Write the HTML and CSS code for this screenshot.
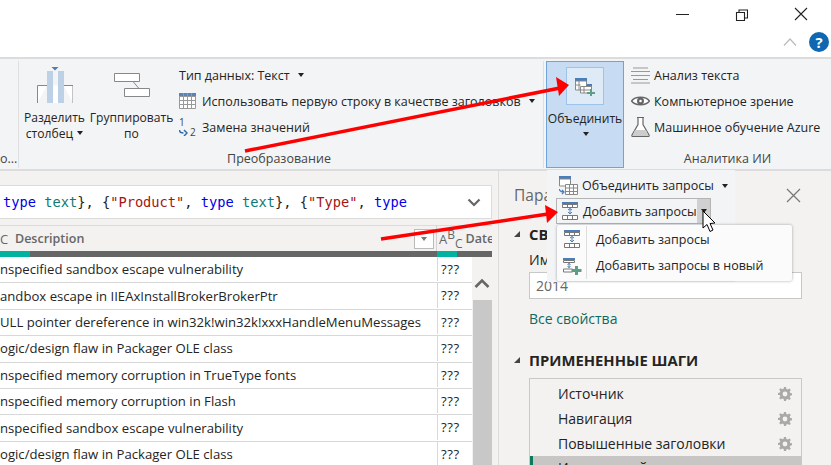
FILE: index.html
```html
<!DOCTYPE html>
<html lang="ru">
<head>
    <meta charset="UTF-8">
    <title>Power Query</title>
    <link rel="stylesheet" href="styles.css">
</head>
<body>

    <svg width="0" height="0" class="defs">
        <symbol id="gear" viewBox="0 0 14 14">
            <path d="M6 0h2l.4 2 1.300.6 1.800-1.100 1.300 1.400-1.100 1.700.5 1.300 1.800.4v2l-1.800.4-.5 1.300 1.100 1.700-1.300 1.400-1.800-1.100-1.300.6L8 14H6l-.4-2-1.300-.6-1.800 1.100-1.300-1.400 1.100-1.700-.5-1.300L0 8V6l1.800-.4.5-1.300-1.100-1.700 1.300-1.400 1.800 1.100 1.300-.6z" fill="#a9a9a9"/>
            <circle cx="7" cy="7" r="2.400" fill="#f3f2f1"/>
        </symbol>
        <symbol id="append" viewBox="0 0 18 18">
            <path d="M1 0h16v2.500H1z" fill="#4a7ebb"/>
            <path d="M1.500 2.500h15v3h-15zM1.500 13.500h15v4h-15z" fill="#fff" stroke="#777"/>
            <path d="M9 6.500v5.500M7 10l2 2 2-2M7 8l2-1.500L11 8" fill="none" stroke="#4a7ebb"/>
            <path d="M6.500 2.500v3M11.500 2.500v3M6.500 13.500v4M11.500 13.500v4" stroke="#777"/>
        </symbol>
    </svg>

    <header class="titlebar">
        <div class="window-controls">
            <svg width="13" height="13" viewBox="0 0 13 13"><path d="M0 6.500h13" stroke="#222"/></svg>
            <svg width="13" height="13" viewBox="0 0 13 13"><path d="M1.500 4.500h8v8h-8zM4 4V2h8.500v8H10" fill="none" stroke="#222" stroke-width="1.100"/></svg>
            <svg width="14" height="14" viewBox="0 0 14 14"><path d="M1 1l12 12M13 1L1 13" stroke="#222" stroke-width="1.100"/></svg>
        </div>
        <div class="help-row">
            <svg width="14" height="8" viewBox="0 0 14 8"><path d="M1 7.500l6-6.500 6 6.500" fill="none" stroke="#bbb" stroke-width="1.200"/></svg>
            <span class="help">?</span>
        </div>
    </header>

    <section class="ribbon">
        <div class="group group-cut">
            <span class="group-label">о...</span>
        </div>

        <div class="group group-transform">
            <div class="group-body">
                <div class="big-btn btn-split">
                    <svg width="36" height="36" viewBox="0 0 36 36">
                        <path d="M.5 36V18.500h9.500M36 36V18.500h-9.500" fill="#fff" stroke="#888"/>
                        <path d="M10 18.500h16V36H10z" fill="#fff"/>
                        <path d="M10 4h6v32h-6zM21 4h6v32h-6z" fill="#bcd1e6"/>
                        <path d="M14.500 0h7L18 3.500z" fill="#4a7ebb"/>
                    </svg>
                    <span class="big-label">Разделить<br>столбец <i class="caret"></i></span>
                </div>
                <div class="big-btn btn-group">
                    <svg width="36" height="36" viewBox="0 0 36 36">
                        <path d="M.5 6.500h25v8H.5zM10.500 21.500h25v8h-25z" fill="#fff" stroke="#888"/>
                        <path d="M19 14.500l6 7" stroke="#888"/>
                    </svg>
                    <span class="big-label">Группировать<br>по</span>
                </div>
                <ul class="cmd-list">
                    <li>Тип данных: Текст <i class="caret"></i></li>
                    <li>
                        <svg width="18" height="16" viewBox="0 0 18 16">
                            <path d="M0 0h17v4H0z" fill="#5b83b5"/>
                            <path d="M.5 3.500h16v12H.5zM.5 7.500h16M.5 11.500h16M4.500 0v15M8.500 0v15M12.500 0v15" fill="#fff" stroke="#999"/>
                        </svg>
                        Использовать первую строку в качестве заголовков <i class="caret"></i>
                    </li>
                    <li>
                        <span class="replace-icon">
                            <span>1</span>
                            <svg width="9" height="7" viewBox="0 0 9 7"><path d="M.5 1q0 3 4 3M5 1l3 3-3 3" fill="none" stroke="#2f6fa8" stroke-width="1.500"/></svg>
                            <span class="two">2</span>
                        </span>
                        Замена значений
                    </li>
                </ul>
            </div>
            <span class="group-label">Преобразование</span>
        </div>

        <div class="group group-ai">
            <div class="group-body">
                <div class="merge-btn">
                    <span class="merge-icon">
                        <svg width="20" height="19" viewBox="0 0 20 19">
                            <path d="M0 1h12v3H0zM5 7h12v3H5z" fill="#4a7ebb"/>
                            <path d="M.5 4h11v9H.5z" fill="#fff" stroke="#888"/>
                            <path d="M5.500 9.500h11V16h-11z" fill="#fff" stroke="#888"/>
                            <path d="M.5 8h5M4 4v9M9 9.500V16M5.500 13h11" stroke="#888"/>
                            <path d="M15 12h2v3h3v2h-3v2h-2v-2h-3v-2h3z" fill="#5f9e84"/>
                        </svg>
                    </span>
                    <span class="big-label">Объединить</span>
                    <i class="caret"></i>
                </div>
                <ul class="cmd-list cmd-list-ai">
                    <li>
                        <svg width="19" height="17" viewBox="0 0 19 17"><path d="M2 1h15M0 4.500h19M0 8.500h19M2 12.500h15M0 16h19" stroke="#999"/></svg>
                        Анализ текста
                    </li>
                    <li>
                        <svg width="19" height="14" viewBox="0 0 19 14"><path d="M.5 7C4 2 15 2 18.500 7 15 12 4 12 .5 7z" fill="#fff" stroke="#666" stroke-width="1.500"/><circle cx="9.500" cy="7" r="3.500" fill="#666"/><circle cx="9.500" cy="7" r="1.300" fill="#fff"/></svg>
                        Компьютерное зрение
                    </li>
                    <li>
                        <svg width="19" height="20" viewBox="0 0 19 20"><path d="M6 .5h7M7 1v6.500L1 18q-.5 1.500 1 1.500h15q1.500 0 1-1.500L12 7.500V1" fill="#fff" stroke="#666" stroke-width="1.200"/><path d="M4 13h11l2.500 6h-16z" fill="#ccc"/></svg>
                        Машинное обучение Azure
                    </li>
                </ul>
            </div>
            <span class="group-label">Аналитика ИИ</span>
        </div>
    </section>

    <main class="workspace">
        <div class="data-side">
            <div class="formula">
                <code><span class="kw">type</span> <span class="ty">text</span>}, {<span class="str">"Product"</span>, <span class="kw">type</span> <span class="ty">text</span>}, {<span class="str">"Type"</span>, <span class="kw">type</span></code>
                <svg width="14" height="9" viewBox="0 0 14 9"><path d="M1.500 1.500L7 7l5.500-5.500" fill="none" stroke="#666" stroke-width="2.200"/></svg>
            </div>

            <div class="grid-head">
                <div class="head-desc">
                    <span class="abc abc-cut">C</span>
                    <span class="head-name">Description</span>
                    <span class="filter"><i class="caret caret-gray"></i></span>
                </div>
                <div class="head-date">
                    <span class="abc">A<sup>B</sup><sub>C</sub></span>
                    <span class="head-name">Date</span>
                </div>
            </div>
            <div class="quality">
                <span class="q-desc"><i></i></span>
                <span class="q-date"><i></i></span>
            </div>

            <div class="grid-body">
                <div class="rows">
                    <div class="row"><span>nspecified sandbox escape vulnerability</span><span>???</span></div>
                    <div class="row"><span>andbox escape in IIEAxInstallBrokerBrokerPtr</span><span>???</span></div>
                    <div class="row"><span>ULL pointer dereference in win32k!win32k!xxxHandleMenuMessages</span><span>???</span></div>
                    <div class="row"><span>ogic/design flaw in Packager OLE class</span><span>???</span></div>
                    <div class="row"><span>nspecified memory corruption in TrueType fonts</span><span>???</span></div>
                    <div class="row"><span>nspecified memory corruption in Flash</span><span>???</span></div>
                    <div class="row"><span>nspecified sandbox escape vulnerability</span><span>???</span></div>
                    <div class="row"><span>ogic/design flaw in Packager OLE class</span><span>???</span></div>
                </div>
                <div class="scrollbar">
                    <svg width="16" height="11" viewBox="0 0 16 11"><path d="M1.500 9L8 2.500 14.500 9" fill="none" stroke="#666" stroke-width="2.600"/></svg>
                    <div class="thumb"></div>
                </div>
            </div>
        </div>

        <aside class="pane">
            <div class="pane-title">
                <span>Пара</span>
                <svg width="15" height="15" viewBox="0 0 15 15"><path d="M1 1l13 13M14 1L1 14" stroke="#777" stroke-width="1.200"/></svg>
            </div>
            <h3 class="section"><i class="tri"></i>СВ</h3>
            <div class="field-label">Им</div>
            <div class="field">2014</div>
            <div class="link">Все свойства</div>
            <h3 class="section section-steps"><i class="tri"></i>ПРИМЕНЕННЫЕ ШАГИ</h3>
            <ul class="steps">
                <li>Источник <svg width="14" height="14"><use href="#gear"/></svg></li>
                <li>Навигация <svg width="14" height="14"><use href="#gear"/></svg></li>
                <li>Повышенные заголовки <svg width="14" height="14"><use href="#gear"/></svg></li>
                <li class="step-active">Измененный тип</li>
            </ul>
        </aside>
    </main>

    <!-- dropdown opened from the merge button -->
    <div class="merge-panel">
        <div class="panel-row">
            <svg width="19" height="19" viewBox="0 0 19 19">
                <path d="M0 0h12v3H0z" fill="#4a7ebb"/>
                <path d="M.5 3h11v7H.5z" fill="#fff" stroke="#888"/>
                <path d="M6.500 8.500h12v10h-12zM6.500 12h12M6.500 15.500h12M10.500 8.500v10M14.500 8.500v10" fill="#fff" stroke="#888"/>
                <path d="M0 13q1 3 5 3M3 14l2 2-2 2" fill="none" stroke="#4a7ebb" stroke-width="1.300"/>
            </svg>
            Объединить запросы <i class="caret"></i>
        </div>
        <div class="append-btn">
            <span class="append-main"><svg width="18" height="18"><use href="#append"/></svg>Добавить запросы</span>
            <span class="append-split"><i class="caret"></i></span>
        </div>
    </div>

    <div class="append-menu">
        <div class="menu-row"><span class="menu-ico"><svg width="18" height="18"><use href="#append"/></svg></span><span>Добавить запросы</span></div>
        <div class="menu-row">
            <span class="menu-ico">
                <svg width="20" height="18" viewBox="0 0 20 18">
                    <path d="M1 1h12v2H1z" fill="#4a7ebb"/>
                    <path d="M1.500 3.500h11v2h-11zM1.500 12h9v3h-9z" fill="#fff" stroke="#777"/>
                    <path d="M7 6.500v4M5.500 7.500L7 6.500l1.500 1M5.500 9.500l1.500 1 1.500-1" fill="none" stroke="#4a7ebb"/>
                    <path d="M13 9h3v3h3.500v3H16v3h-3v-3H9.500v-3H13z" fill="#5f9e84"/>
                </svg>
            </span>
            <span>Добавить запросы в новый</span>
        </div>
    </div>

    <!-- annotation arrows and mouse pointer drawn over the screenshot -->
    <svg class="overlay" width="831" height="465" viewBox="0 0 831 465">
        <path d="M245 151L560 88" stroke="#f00" stroke-width="3.500"/>
        <path d="M569 85L556 77l3 19z" fill="#f00"/>
        <path d="M381 239L548 214" stroke="#f00" stroke-width="3.500"/>
        <path d="M558 212L545 205l2 18z" fill="#f00"/>
        <path d="M703 211v17l4-3.500 3 7 3-1.500-3-6.500 5-.5z" fill="#fff" stroke="#000"/>
    </svg>

</body>
</html>
```

FILE: styles.css
```css
* { box-sizing: border-box; }
html, body {
    margin: 0;
    height: 465px;
    overflow: hidden;
}
body {
    position: relative;
    width: 831px;
    background: #f3f2f1;
    color: #252423;
    font-family: "Open Sans", sans-serif;
    font-size: 12.500px;
}
ul { margin: 0; padding: 0; list-style: none; }
.defs { position: absolute; }

/* title bar */
.titlebar {
    height: 57px;
    background: #fff;
    padding: 7px 23px 0 0;
}
.window-controls {
    display: flex;
    justify-content: flex-end;
    align-items: center;
    gap: 46px;
    height: 14px;
}
.help-row {
    display: flex;
    justify-content: flex-end;
    align-items: center;
    gap: 12px;
    margin: 11px -21px 0 0;
}
.help {
    width: 20px;
    height: 20px;
    border-radius: 50%;
    background: #0f67b1;
    color: #fff;
    font-weight: 700;
    font-size: 15px;
    line-height: 20px;
    text-align: center;
}

/* ribbon */
.ribbon {
    display: flex;
    height: 114px;
    background: #f3f4f6;
    border-top: 2px solid #dcdcdc;
    border-bottom: 2px solid #dcdcdc;
    padding-top: 2px;
}
.group {
    display: flex;
    flex-direction: column;
    height: 107px;
    border-right: 1px solid #dfdfdf;
}
.group-body { display: flex; flex: 1; }
.group-label {
    text-align: center;
    color: #444;
    line-height: 18px;
    white-space: nowrap;
}
.group-cut {
    width: 19px;
    justify-content: flex-end;
    overflow: hidden;
}
.group-cut .group-label { text-align: left; }
.group-transform { width: 525px; }
.group-transform > .group-label { padding-right: 4px; }
.group-ai { border-right: 0; margin-left: 2px; }
.group-ai .group-body { width: 285px; }

.big-btn {
    display: flex;
    flex-direction: column;
    align-items: center;
    padding-top: 6px;
    text-align: center;
}
.btn-split { width: 71px; }
.btn-group { width: 83px; }
.big-label {
    margin-top: 7px;
    font-size: 12.100px;
    line-height: 16px;
    white-space: nowrap;
}
.caret {
    display: inline-block;
    width: 0;
    height: 0;
    margin: 0 0 3px 1px;
    border: 3.500px solid transparent;
    border-top: 4px solid #222;
    border-bottom: 0;
}
.caret-gray { border-top-color: #777; }

.cmd-list {
    display: flex;
    flex-direction: column;
    gap: 6px;
    padding: 4px 0 0 6px;
}
.cmd-list li {
    display: flex;
    align-items: center;
    gap: 5px;
    height: 20px;
    white-space: nowrap;
}
.cmd-list li .caret { margin: 0 0 0 3px; }
.replace-icon {
    display: grid;
    grid-template-columns: 8px 10px;
    width: 18px;
    font-size: 10px;
    line-height: 9px;
    color: #444;
}
.replace-icon svg { grid-row: 2; margin-top: 2px; }
.replace-icon .two { grid-row: 2; grid-column: 2; padding-left: 3px; margin-top: 1px; }
.cmd-list-ai li { gap: 4px; }

.merge-btn {
    display: flex;
    flex-direction: column;
    align-items: center;
    width: 78px;
    height: 107px;
    padding-top: 5px;
    background: #c7dcf2;
    border: 1px solid #6ea3dc;
}
.merge-btn .big-label { margin: 6px 0 5px; }
.merge-icon {
    display: flex;
    justify-content: center;
    padding-top: 9px;
    width: 38px;
    height: 38px;
    background: #deebf7;
    border: 1px solid #9cc3ea;
}
.cmd-list-ai { padding-left: 7px; }
.group-ai .group-label { margin-top: -18px; width: 285px; padding-left: 78px; position: relative; }

/* data side */
.workspace { display: flex; height: 294px; overflow: hidden; }
.data-side { width: 492px; padding-top: 14px; }
.formula {
    display: flex;
    justify-content: space-between;
    align-items: center;
    height: 34px;
    padding: 0 10px 0 3px;
    background: #fff;
    border: 1px solid #dcdcdc;
    border-left: 0;
}
.formula code {
    font-family: "DejaVu Sans Mono", monospace;
    font-size: 13.700px;
    white-space: pre;
}
.formula .kw { color: #0000e6; }
.formula .ty { color: #0b7a75; }
.formula .str { color: #a31515; }

.grid-head {
    display: flex;
    height: 26px;
    margin-top: 6px;
    background: #f3f2f1;
    border-top: 1px solid #dcdcdc;
    color: #666;
    font-weight: 600;
}
.head-desc {
    display: flex;
    align-items: center;
    width: 437px;
    border-right: 1px solid #d2d2d2;
}
.head-name { margin-left: 7px; white-space: nowrap; }
.abc { font-weight: 400; font-size: 13px; line-height: 14px; }
.abc sup, .abc sub { font-size: 12px; line-height: 0; }
.abc-cut { width: 8px; }
.filter {
    display: flex;
    justify-content: center;
    align-items: center;
    width: 20px;
    height: 20px;
    margin: 0 2px 0 auto;
    background: #fff;
    border: 1px solid #bbb;
}
.filter .caret { margin: 0; }
.head-date {
    display: flex;
    align-items: center;
    width: 55px;
    padding-left: 2px;
    overflow: hidden;
}
.head-date .head-name { margin-left: 3px; }

.quality {
    display: flex;
    height: 6px;
    background: #666;
}
.q-desc { width: 437px; }
.q-date { width: 55px; }
.quality i { display: block; height: 6px; background: #00b2a0; }
.q-desc i { width: 30px; }
.q-date i { width: 20px; }

.grid-body { display: flex; height: 209px; overflow: hidden; }
.rows { width: 472px; }
.row {
    display: flex;
    height: 26.400px;
    align-items: center;
    padding-bottom: 1px;
    background: #fff;
    border-bottom: 1px solid #d9d9d9;
    font-size: 13.150px;
    white-space: nowrap;
}
.row span:first-child { width: 437px; }
.row span:last-child {
    align-self: stretch;
    width: 35px;
    padding-left: 3px;
    line-height: 25px;
    letter-spacing: .6px;
    border-left: 1px solid #d9d9d9;
}
.scrollbar { width: 20px; }
.scrollbar svg { display: block; margin: 21px auto 11px; }
.thumb {
    width: 19px;
    height: 166px;
    margin-left: 1px;
    background: #c8c8c8;
}

/* query settings pane */
.pane {
    width: 339px;
    margin-left: 6px;
    padding: 14px 0 0 15px;
    border-left: 1px solid #dcdcdc;
    font-size: 14px;
}
.pane-title {
    display: flex;
    justify-content: space-between;
    align-items: center;
    height: 20px;
    padding-right: 30px;
    color: #666;
    font-size: 15.500px;
}
.section {
    display: flex;
    align-items: center;
    margin: 19px 0 0;
    font-size: 14.800px;
    font-weight: 700;
    line-height: 20px;
    color: #252423;
}
.section-steps { margin-top: 22px; }
.tri {
    width: 0;
    height: 0;
    margin-right: 9px;
    border-style: solid;
    border-width: 0 0 6px 6px;
    border-color: transparent transparent #444 transparent;
}
.field-label { margin: 7px 0 0 15px; line-height: 18px; }
.field {
    width: 273px;
    height: 27px;
    margin: 3px 0 0 15px;
    padding-left: 6px;
    line-height: 25px;
    background: #fff;
    border: 1px solid #c8c8c8;
    color: #666;
}
.link { margin: 11px 0 0 15px; color: #0b6a62; line-height: 18px; }
.steps {
    width: 273px;
    height: 88px;
    margin: 8px 0 0 15px;
    padding-top: 2px;
    border: 1px solid #c8c8c8;
    border-bottom: 0;
    overflow: hidden;
}
.steps li {
    display: flex;
    justify-content: space-between;
    align-items: center;
    height: 25px;
    padding: 0 9px 0 28px;
}
.steps .step-active {
    height: 22px;
    background: #c8c6c4;
    border-left: 3px solid #0b7a5e;
    padding-left: 25px;
}

/* overlays: open dropdown, arrows, pointer */
.merge-panel {
    position: absolute;
    left: 547px;
    top: 170px;
    width: 188px;
    height: 112px;
    padding: 3px 0 0 9px;
    background: #f3f4f6;
}
.panel-row {
    display: flex;
    align-items: center;
    gap: 4px;
    height: 25px;
    margin-left: 3px;
    white-space: nowrap;
}
.panel-row .caret { margin: 0 0 0 4px; }
.append-btn {
    display: flex;
    width: 155px;
    height: 26px;
    border: 1px solid #b4b4b4;
}
.append-main {
    display: flex;
    align-items: center;
    gap: 4px;
    width: 140px;
    padding-left: 4px;
    white-space: nowrap;
}
.append-split {
    display: flex;
    justify-content: center;
    align-items: center;
    flex: 1;
    background: #d0d0d0;
}
.append-split .caret { margin: 0; }
.append-menu {
    position: absolute;
    left: 557px;
    top: 225px;
    width: 235px;
    height: 56px;
    padding-top: 1px;
    background: #fbfbfb;
    border-radius: 2px;
    box-shadow: 0 0 3px rgba(0, 0, 0, .35);
}
.menu-row {
    display: flex;
    align-items: center;
    height: 26.500px;
    white-space: nowrap;
}
.menu-ico {
    display: flex;
    justify-content: center;
    width: 30px;
    height: 100%;
    align-items: center;
    margin-right: 9px;
    border-right: 1px solid #ddd;
}
.overlay {
    position: absolute;
    left: 0;
    top: 0;
    pointer-events: none;
}
```
